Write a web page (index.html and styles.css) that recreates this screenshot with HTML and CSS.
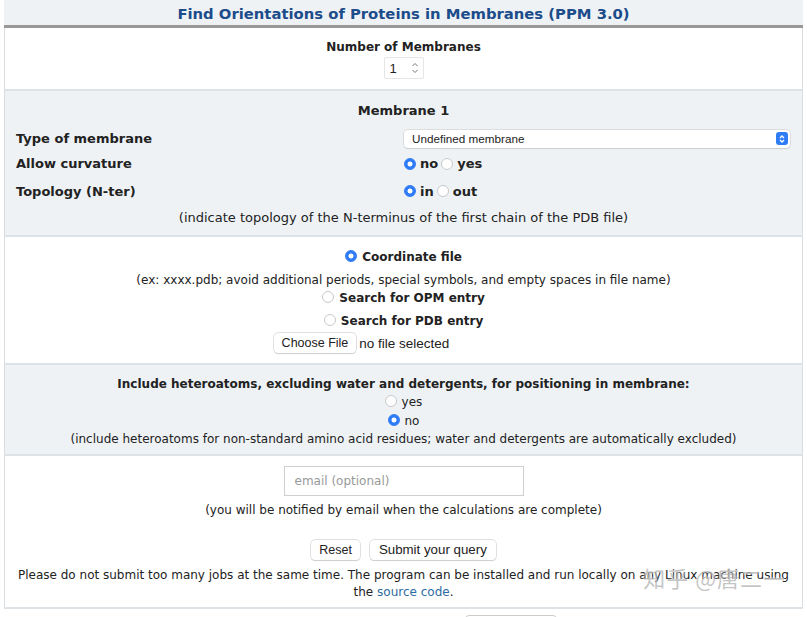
FILE: index.html
```html
<!DOCTYPE html>
<html>
<head>
<meta charset="utf-8">
<link rel="stylesheet" href="styles.css">
</head>
<body>
<div class="page">
  <div class="header">Find Orientations of Proteins in Membranes (PPM 3.0)</div>

  <div class="section white s1">
    <div class="bold">Number of Membranes</div>
    <div class="numbox"><span>1</span>
      <svg class="spin" width="8" height="14" viewBox="0 0 8 14"><path d="M1.5 5 L4 2.5 L6.5 5" fill="none" stroke="#777" stroke-width="1"/><path d="M1.5 9 L4 11.5 L6.5 9" fill="none" stroke="#777" stroke-width="1"/></svg>
    </div>
  </div>

  <div class="section gray s2">
    <div class="bold mtitle">Membrane 1</div>
    <div class="grid">
      <div class="lbl bold">Type of membrane</div>
      <div class="val">
        <div class="select"><span>Undefined membrane</span>
          <span class="selbtn"><svg width="8" height="10" viewBox="0 0 8 10"><path d="M2 4 L4 2 L6 4" fill="none" stroke="#fff" stroke-width="1.3"/><path d="M2 6 L4 8 L6 6" fill="none" stroke="#fff" stroke-width="1.3"/></svg></span>
        </div>
      </div>
      <div class="lbl bold r2">Allow curvature</div>
      <div class="val r2 bold"><span class="radio on"></span> no <span class="radio"></span> yes</div>
      <div class="lbl bold r3">Topology (N-ter)</div>
      <div class="val r3 bold"><span class="radio on"></span> in <span class="radio"></span> out</div>
    </div>
    <div class="note n2">(indicate topology of the N-terminus of the first chain of the PDB file)</div>
  </div>

  <div class="section white s3">
    <div class="bold line">
      <span class="radio on"></span> Coordinate file</div>
    <div class="line ex">(ex: xxxx.pdb; avoid additional periods, special symbols, and empty spaces in file name)</div>
    <div class="bold line"><span class="radio"></span> Search for OPM entry</div>
    <div class="bold line l4"><span class="radio"></span> Search for PDB entry</div>
    <div class="filerow"><span class="btn">Choose File</span><span class="nofile">no file selected</span></div>
  </div>

  <div class="section gray s4">
    <div class="bold line">Include heteroatoms, excluding water and detergents, for positioning in membrane:</div>
    <div class="line"><span class="radio"></span> yes</div>
    <div class="line"><span class="radio on"></span> no</div>
    <div class="line">(include heteroatoms for non-standard amino acid residues; water and detergents are automatically excluded)</div>
  </div>

  <div class="section white s5">
    <div class="email">email (optional)</div>
    <div class="line n5">(you will be notified by email when the calculations are complete)</div>
    <div class="btnrow"><span class="btn">Reset</span><span class="btn wide">Submit your query</span></div>
    <div class="para">Please do not submit too many jobs at the same time. The program can be installed and run locally on any Linux machine using the <a href="#">source code</a>.</div>
    <div class="watermark">知乎 @唐二一</div>
  </div>
  <div class="tail"><span class="tailbox"></span></div>
</div>
</body>
</html>
```
FILE: styles.css
```css
html, body {
  margin: 0;
  padding: 0;
  background: #fff;
}
body {
  font-family: "DejaVu Sans", Verdana, sans-serif;
  font-size: 12px;
  color: #222;
}
.page {
  margin: 0 4px;
  width: 799px;
}
.header {
  height: 25px;
  line-height: 28px;
  background: #eef2f5;
  border-bottom: 3px solid #999;
  text-align: center;
  color: #1c4c8a;
  font-weight: bold;
  font-size: 14.8px;
}
.section {
  border-left: 1px solid #d8dde1;
  border-right: 1px solid #d8dde1;
  border-bottom: 2px solid #dde2e6;
  text-align: center;
  box-sizing: border-box;
}
.white { background: #fff; }
.gray { background: #eef2f5; }
.bold { font-weight: bold; }

.s1 { height: 63px; padding-top: 10px; }
.s1 .bold { line-height: 18px; }
.numbox {
  display: inline-flex;
  align-items: center;
  justify-content: space-between;
  box-sizing: border-box;
  width: 40px;
  height: 22px;
  margin-top: 1px;
  padding: 0 4px 0 5px;
  border: 1px solid #e6e6e6;
  border-radius: 2px;
  font-family: "Liberation Sans", Arial, sans-serif;
  font-size: 13px;
  background: #fff;
}
.spin { display: block; }

.s2 { height: 146px; padding-top: 11px; font-size: 13px; }
.mtitle { line-height: 18px; }
.grid {
  display: grid;
  grid-template-columns: 388px 386px;
  grid-template-rows: 19px 27px 28px;
  margin-top: 9px;
  padding-left: 11px;
  text-align: left;
  align-items: center;
}
.val { display: flex; align-items: center; gap: 3px; }
.r2, .r3 { padding-top: 4px; }
.select {
  flex: 1;
  height: 18px;
  box-sizing: border-box;
  background: #fff;
  border-radius: 4px;
  box-shadow: 0 0 0 0.5px #c8c8c8, 0 1px 1px rgba(0,0,0,0.12);
  display: flex;
  align-items: center;
  justify-content: space-between;
  padding: 0 2px 0 8px;
  font-family: "Liberation Sans", Arial, sans-serif;
  font-size: 11.7px;
  color: #222;
}
.selbtn {
  width: 12px;
  height: 13px;
  background: #2f7cf6;
  border-radius: 3px;
  display: flex;
  align-items: center;
  justify-content: center;
}
.radio {
  display: inline-block;
  width: 10px;
  height: 10px;
  border-radius: 50%;
  border: 1px solid #c9c9c9;
  background: #fff;
  vertical-align: -1px;
  box-sizing: content-box;
  margin-right: 1px;
}
.radio.on {
  border-color: #2f7cf6;
  background: radial-gradient(circle, #fff 0 2.2px, #2f7cf6 2.8px);
}
.n2 { margin-top: 6px; line-height: 18px; }

.s3 { height: 128px; padding-top: 11px; }
.line { line-height: 18px; }
.s3 .ex { margin-top: 5px; }
.l4 { margin-top: 5px; }
.filerow {
  display: flex;
  justify-content: center;
  align-items: center;
  gap: 3px;
  margin-top: 3px;
  padding-right: 84px;
}
.btn {
  display: inline-block;
  height: 20px;
  line-height: 20px;
  padding: 0 8px;
  background: #fff;
  border-radius: 4px;
  box-shadow: 0 0 0 0.5px #c4c4c4, 0 1px 1px rgba(0,0,0,0.15);
  font-family: "Liberation Sans", Arial, sans-serif;
  font-size: 12.5px;
  color: #222;
}
.btn.wide { font-size: 13.3px; padding: 0 9px; }
.nofile { font-family: "Liberation Sans", Arial, sans-serif; font-size: 13.5px; }

.s4 { height: 91px; padding-top: 10px; }
.s4 .line { line-height: 18.3px; }

.s5 { height: 153px; padding-top: 10px; position: relative; }
.email {
  width: 240px;
  height: 30px;
  box-sizing: border-box;
  margin: 0 auto;
  border: 1px solid #cfcfcf;
  text-align: left;
  padding-left: 10px;
  line-height: 28px;
  color: #999;
  background: #fff;
}
.n5 { margin-top: 5px; }
.btnrow {
  display: flex;
  justify-content: center;
  gap: 10px;
  margin-top: 21px;
}
.para { margin-top: 7px; line-height: 17px; padding: 0 8px; }
.para a { color: #2d6ba3; text-decoration: none; }
.watermark {
  position: absolute;
  right: 16px;
  top: 106px;
  font-family: "Noto Sans CJK SC", sans-serif;
  font-size: 22px;
  line-height: 30px;
  color: rgba(140,140,140,0.5);
  text-shadow: 0 0 2px rgba(255,255,255,0.9);
  letter-spacing: 1px;
}
.tail { height: 9px; position: relative; }
.tailbox {
  position: absolute;
  left: 461px;
  top: 6px;
  width: 90px;
  height: 10px;
  border: 1px solid #ccc;
  border-radius: 4px;
}
```
